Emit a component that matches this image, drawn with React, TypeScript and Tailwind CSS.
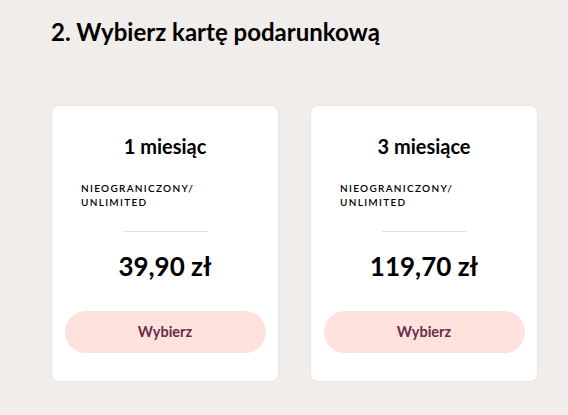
import React from "react";

const plans = [
  { title: "1 miesiąc", price: "39,90 zł" },
  { title: "3 miesiące", price: "119,70 zł" },
];

export default function App() {
  return (
    <div
      className="w-[568px] h-[415px] bg-[#f0edea] pl-[51px] pt-[16px]"
      style={{ fontFamily: "Lato, 'Noto Sans', sans-serif" }}
    >
      <h2 className="text-[24px] font-bold leading-[32px] text-black tracking-[0px]">
        2. Wybierz kartę podarunkową
      </h2>
      <div className="flex gap-[31px] mt-[57px]">
        {plans.map((p) => (
          <div
            key={p.title}
            className="w-[228px] h-[277px] bg-white rounded-[8px] border border-[#e9e5e2] flex flex-col items-center px-[14px] pt-[26px]"
          >
            <div className="text-[20px] font-bold leading-[28px] text-black">{p.title}</div>
            <div className="self-stretch pl-[15px] mt-[21px] text-[10px] font-semibold tracking-[1.3px] leading-[14px] text-black">
              NIEOGRANICZONY/
              <br />
              UNLIMITED
            </div>
            <div className="w-[85px] h-px bg-[#e3e0de] mt-[22px]" />
            <div className="text-[26px] font-bold leading-[32px] text-black mt-[18px]">{p.price}</div>
            <button className="mt-[29px] w-[201px] h-[42px] rounded-full bg-[#ffe1de] text-[#6a2c48] text-[14.5px] font-bold">
              Wybierz
            </button>
          </div>
        ))}
      </div>
    </div>
  );
}
